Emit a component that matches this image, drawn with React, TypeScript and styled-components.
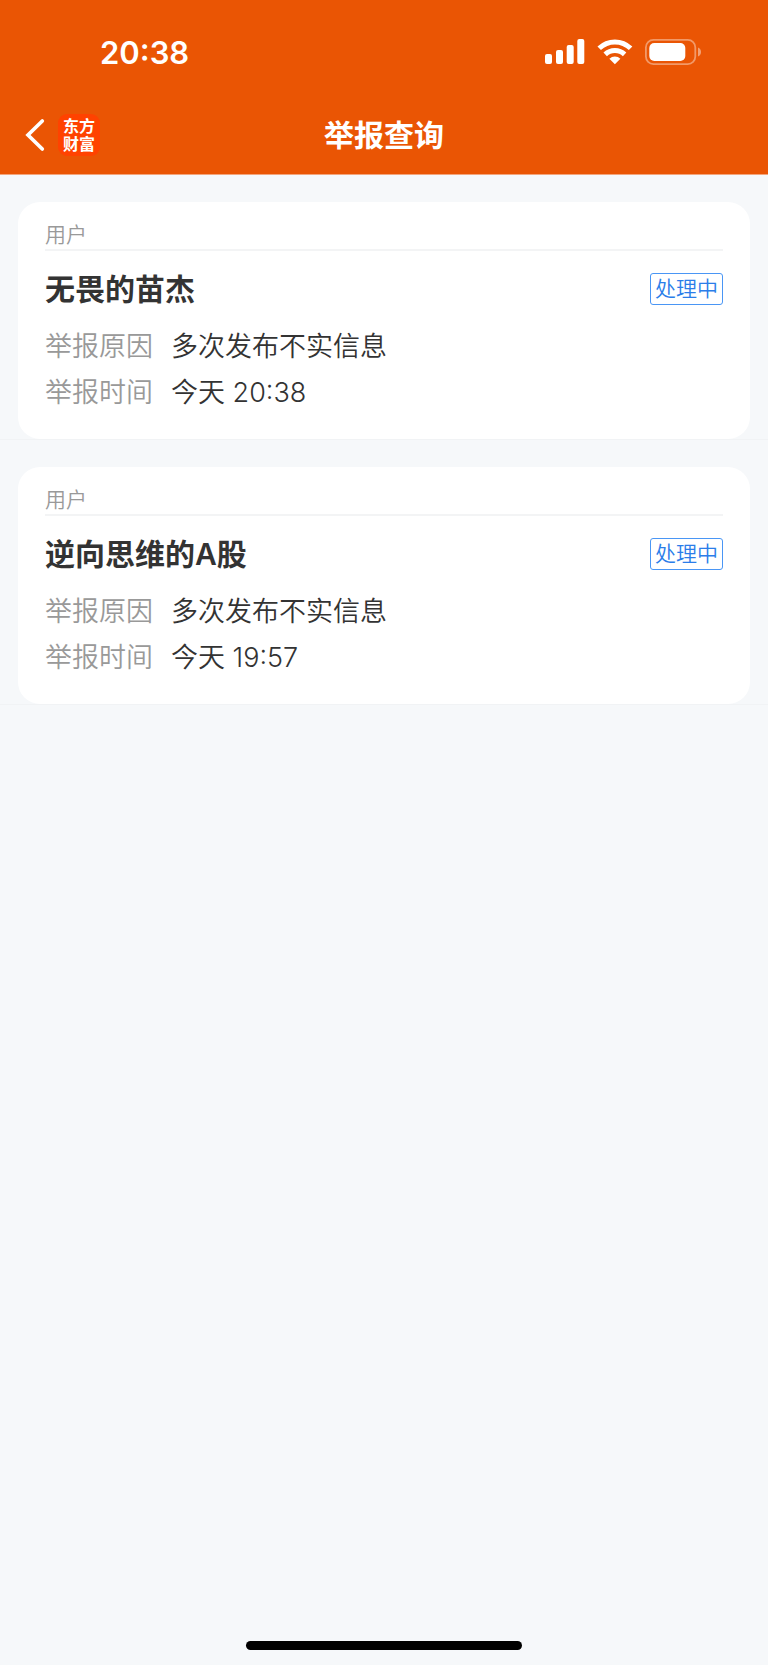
import React from "react";
import styled, { createGlobalStyle } from "styled-components";

const GlobalStyle = createGlobalStyle`
  *, *::before, *::after { box-sizing: border-box; }
  body {
    margin: 0;
    background: #f6f8fa;
    font-family: Inter, "Noto Sans CJK SC", sans-serif;
    color: #333;
  }
  h1, h2, p, dl, dt, dd, ul { margin: 0; padding: 0; }
`;

const Screen = styled.div`
  min-height: 100vh;
  display: flex;
  flex-direction: column;
`;

const Header = styled.header`
  background: #ea5504;
  border-bottom: 1px solid #f3a57c;
  color: #fff;
`;

const StatusBar = styled.div`
  display: flex;
  align-items: center;
  justify-content: space-between;
  height: 96px;
  padding: 8px 66px 0 100px;
`;

const Clock = styled.time`
  padding-top: 2px;
  font-size: 31px;
  font-weight: 600;
  line-height: 40px;
`;

const StatusIcons = styled.div`
  display: flex;
  align-items: center;
  gap: 12px;
`;

const NavBar = styled.nav`
  display: grid;
  grid-template-columns: 1fr auto 1fr;
  align-items: center;
  height: 78px;
  padding: 0 24px;
`;

const NavStart = styled.div`
  display: flex;
  align-items: center;
  gap: 10px;
`;

const BackButton = styled.button`
  display: flex;
  padding: 0;
  border: 0;
  background: none;
  color: inherit;
  cursor: pointer;
`;

const Brand = styled.a`
  display: flex;
  flex-direction: column;
  align-items: center;
  justify-content: center;
  width: 42px;
  height: 42px;
  border-radius: 9px;
  background: #ff4200;
  color: #fff;
  font-size: 16px;
  font-weight: 700;
  line-height: 18px;
  text-decoration: none;
`;

const Title = styled.h1`
  font-size: 30px;
  font-weight: 600;
  line-height: 40px;
`;

const ReportList = styled.ul`
  flex: 1;
  list-style: none;
`;

const ReportItem = styled.li`
  padding: 27px 18px 0;
  border-bottom: 1px solid #f1f3f5;
`;

const Card = styled.article`
  padding: 18px 27px 23px;
  border-radius: 22px;
  background: #fff;
`;

const Kind = styled.p`
  border-bottom: 2px solid #f3f4f5;
  color: #999;
  font-size: 21px;
  font-weight: 350;
  line-height: 29px;
`;

const CardHead = styled.div`
  display: flex;
  align-items: center;
  justify-content: space-between;
  margin: 22px 0 19px;
  height: 32px;
`;

const UserName = styled.h2`
  font-size: 30px;
  font-weight: 600;
  line-height: 32px;
`;

const Tag = styled.span`
  padding: 0 4px;
  border: 1px solid #4a96f5;
  border-radius: 3px;
  color: #2b7de9;
  font-size: 21px;
  font-weight: 350;
  line-height: 30px;
`;

const Details = styled.dl`
  display: grid;
  grid-template-columns: auto 1fr;
  column-gap: 18px;
  font-size: 27px;
  font-weight: 350;
  line-height: 46px;
`;

const Term = styled.dt`
  color: #999;
`;

const HomeArea = styled.footer`
  display: flex;
  justify-content: center;
  padding-bottom: 15px;
`;

const HomeIndicator = styled.div`
  width: 36%;
  height: 9px;
  border-radius: 5px;
  background: #000;
`;

const SignalIcon = () => (
  <svg width="40" height="26" viewBox="0 0 40 26" fill="#fff" aria-hidden="true">
    <rect x="0" y="15" width="7" height="10" rx="2" />
    <rect x="11" y="11" width="7" height="14" rx="2" />
    <rect x="21.7" y="6" width="7" height="19" rx="2" />
    <rect x="32.3" y="0" width="7" height="25" rx="2" />
  </svg>
);

const WifiIcon = () => (
  <svg width="36" height="26" viewBox="0 0 36 26" aria-hidden="true">
    <g fill="none" stroke="#fff" strokeWidth="5">
      <path d="M2.2 9.3a22.5 22.5 0 0 1 31.4 0" />
      <path d="M8.2 15.4a14 14 0 0 1 19.4 0" />
    </g>
    <path d="M12.4 19.8a8 8 0 0 1 11 0l-5.5 5.4z" fill="#fff" />
  </svg>
);

const BatteryIcon = () => (
  <svg width="57" height="26" viewBox="0 0 57 26" aria-hidden="true">
    <rect x="0.9" y="0.9" width="49.4" height="24.2" rx="7.5" fill="none" stroke="#fff" strokeOpacity="0.4" strokeWidth="1.8" />
    <rect x="4.3" y="4" width="36" height="18" rx="5" fill="#fff" />
    <path d="M53 8.6c2 .8 3 2.4 3 4.4s-1 3.600-3 4.400z" fill="#fff" fillOpacity="0.45" />
  </svg>
);

const BackIcon = () => (
  <svg width="24" height="34" viewBox="0 0 24 34" fill="none" aria-hidden="true">
    <path d="M18.300 3L4 17l14.300 14" stroke="#fff" strokeWidth="3.700" strokeLinecap="round" strokeLinejoin="miter" />
  </svg>
);

interface Report {
  name: string;
  reason: string;
  time: string;
}

const reports: Report[] = [
  { name: "无畏的苗杰", reason: "多次发布不实信息", time: "今天 20:38" },
  { name: "逆向思维的A股", reason: "多次发布不实信息", time: "今天 19:57" },
];

export default function App() {
  return (
    <>
      <GlobalStyle />
      <Screen lang="zh-CN">
        <Header>
          <StatusBar>
            <Clock>20:38</Clock>
            <StatusIcons>
              <SignalIcon />
              <WifiIcon />
              <BatteryIcon />
            </StatusIcons>
          </StatusBar>
          <NavBar>
            <NavStart>
              <BackButton type="button" aria-label="返回">
                <BackIcon />
              </BackButton>
              <Brand href="#">
                <span>东方</span>
                <span>财富</span>
              </Brand>
            </NavStart>
            <Title>举报查询</Title>
          </NavBar>
        </Header>
        <ReportList>
          {reports.map((report) => (
            <ReportItem key={report.name}>
              <Card>
                <Kind>用户</Kind>
                <CardHead>
                  <UserName>{report.name}</UserName>
                  <Tag>处理中</Tag>
                </CardHead>
                <Details>
                  <Term>举报原因</Term>
                  <dd>{report.reason}</dd>
                  <Term>举报时间</Term>
                  <dd>{report.time}</dd>
                </Details>
              </Card>
            </ReportItem>
          ))}
        </ReportList>
        <HomeArea>
          <HomeIndicator />
        </HomeArea>
      </Screen>
    </>
  );
}
